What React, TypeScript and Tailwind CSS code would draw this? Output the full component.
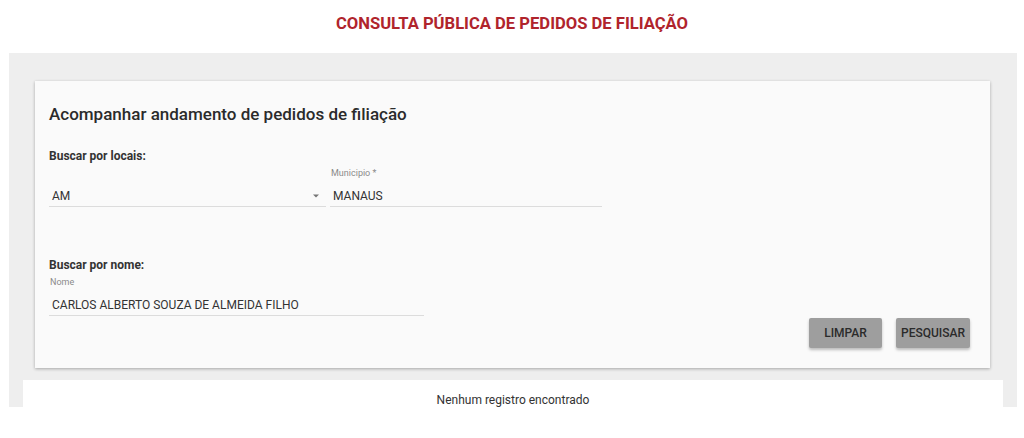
import React from 'react';

const UnderlineField: React.FC<{ label?: string; value: string; className?: string; select?: boolean }> = ({
  label,
  value,
  className = '',
  select
}) => {
  return (
    <div className={`flex flex-col ${className}`}>
      <span className="h-[14px] text-[9px] leading-[14px] text-[#8a8a8a] pl-[1px]">{label}</span>
      <div className="flex items-center h-[27px] pt-[5px] border-b border-[#dcdcdc] pl-[3px]">
        <span className="flex-1 text-[12px] text-[#333]">{value}</span>
        {select && (
          <svg width="10" height="10" viewBox="0 0 10 10" className="mr-[5px]">
            <path d="M2 3.5 L8 3.5 L5 6.5 Z" fill="#757575" />
          </svg>
        )}
      </div>
    </div>
  );
};

export default function App() {
  return (
    <div className="w-[1024px] h-[438px] bg-white font-['Roboto',sans-serif] overflow-hidden">
      {/* Header */}
      <h1 className="h-[53px] flex items-center justify-center pb-[4px] text-[16.6px] font-bold text-[#b0242c]">
        CONSULTA PÚBLICA DE PEDIDOS DE FILIAÇÃO
      </h1>

      {/* Panel */}
      <div className="ml-[9px] w-[1008px] bg-[#eeeeee] pt-[28px] flex flex-col">
        {/* Card */}
        <div className="ml-[26px] w-[955px] h-[287px] bg-[#fafafa] shadow-[0_1px_3px_rgba(0,0,0,0.3)] px-[14px] pt-[21px] flex flex-col">
          <h2 className="text-[17px] font-medium text-[#2b2b2b] leading-[24px]">
            Acompanhar andamento de pedidos de filiação
          </h2>

          <p className="mt-[23px] text-[12px] font-bold text-[#333] leading-[14px]">Buscar por locais:</p>
          <div className="mt-[3px] flex gap-[4px]">
            <UnderlineField value="AM" select className="w-[277px]" />
            <UnderlineField label="Municipio *" value="MANAUS" className="w-[272px]" />
          </div>

          <p className="mt-[51px] text-[12px] font-bold text-[#333] leading-[14px]">Buscar por nome:</p>
          <div className="mt-[3px] flex">
            <UnderlineField label="Nome" value="CARLOS ALBERTO SOUZA DE ALMEIDA FILHO" className="w-[375px]" />
          </div>

          <div className="mt-[2px] flex justify-end gap-[14px] pr-[6px]">
            <button className="w-[73px] h-[30px] bg-[#9e9e9e] rounded-[2px] text-[12px] font-medium text-[#2b2b2b] shadow-[0_2px_3px_rgba(0,0,0,0.25)]">
              LIMPAR
            </button>
            <button className="w-[74px] h-[30px] bg-[#9e9e9e] rounded-[2px] text-[12px] font-medium text-[#2b2b2b] shadow-[0_2px_3px_rgba(0,0,0,0.25)]">
              PESQUISAR
            </button>
          </div>
        </div>

        {/* Results */}
        <div className="mt-[12px] ml-[14px] w-[980px] h-[27px] bg-white flex items-center justify-center pt-[12px]">
          <span className="text-[12px] text-[#333]">Nenhum registro encontrado</span>
        </div>
      </div>
    </div>
  );
}
